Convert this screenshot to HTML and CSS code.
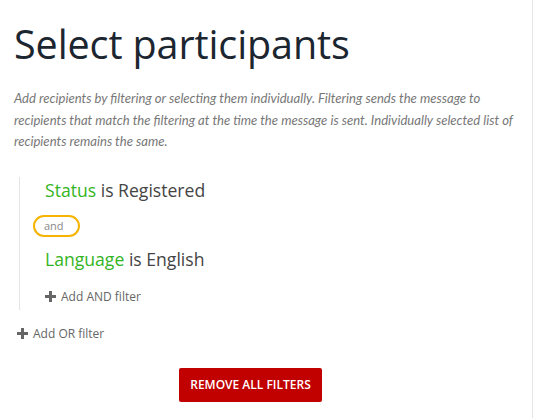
FILE: index.html
```html
<!DOCTYPE html>
<html>
<head>
<meta charset="utf-8">
<link rel="stylesheet" href="styles.css">
</head>
<body>
<div class="page">
  <h1 class="title">Select participants</h1>
  <p class="desc">Add recipients by filtering or selecting them individually. Filtering sends the message to recipients that match the filtering at the time the message is sent. Individually selected list of recipients remains the same.</p>
  <div class="group">
    <div class="rule"><span class="field">Status</span> is Registered</div>
    <div class="op"><span class="pill">and</span></div>
    <div class="rule"><span class="field">Language</span> is English</div>
    <div class="add add-and"><span class="plus"></span>Add AND filter</div>
  </div>
  <div class="add add-or"><span class="plus"></span>Add OR filter</div>
  <div class="actions"><button class="btn-remove">REMOVE ALL FILTERS</button></div>
</div>
</body>
</html>
```
FILE: styles.css
```css
html, body { margin: 0; padding: 0; background: #fff; }
body { font-family: "Open Sans", "DejaVu Sans", sans-serif; color: #444; }
.page {
  width: 533px;
  height: 418px;
  box-sizing: border-box;
  padding: 14px 0 0 14px;
  border-right: 1px solid #e6e6e6;
}
.title {
  margin: 0;
  font-weight: 400;
  font-size: 39.5px;
  line-height: 60px;
  color: #1c2630;
  letter-spacing: -0.1px;
}
.desc {
  margin: 14px 0 0 0;
  padding-right: 14px;
  font-family: "Lato", sans-serif;
  font-style: italic;
  font-size: 13.1px;
  line-height: 21.5px;
  color: #777;
}
.group {
  margin: 24px 0 0 5px;
  border-left: 1px solid #e4e4e4;
  padding: 0 0 2px 25px;
}
.rule {
  font-size: 17.6px;
  line-height: 26px;
  color: #444;
}
.field { color: #33b524; }
.op { margin: 10px 0 9px -12px; }
.pill {
  display: inline-block;
  box-sizing: border-box;
  width: 47px;
  height: 22px;
  border: 2px solid #f6b400;
  border-radius: 11px;
  font-size: 11px;
  line-height: 18px;
  color: #888;
  padding-left: 9px;
}
.add {
  display: flex;
  align-items: center;
  font-size: 12px;
  color: #666;
}
.add-and { margin-top: 14px; height: 22px; }
.add-or { margin-top: 13px; margin-left: 3px; height: 22px; }
.plus {
  position: relative;
  width: 11px;
  height: 11px;
  margin-right: 5px;
}
.plus::before, .plus::after {
  content: "";
  position: absolute;
  background: #666;
}
.plus::before { left: 4px; top: 0; width: 3px; height: 11px; }
.plus::after { left: 0; top: 4px; width: 11px; height: 3px; }
.actions { margin-top: 23px; display: flex; padding-left: 165px; }
.btn-remove {
  width: 143px;
  height: 34px;
  border: 0;
  border-radius: 2px;
  background: #c10000;
  color: #fff;
  font-family: "Open Sans", sans-serif;
  font-size: 12px;
  font-weight: 600;
  padding: 0;
}
```
